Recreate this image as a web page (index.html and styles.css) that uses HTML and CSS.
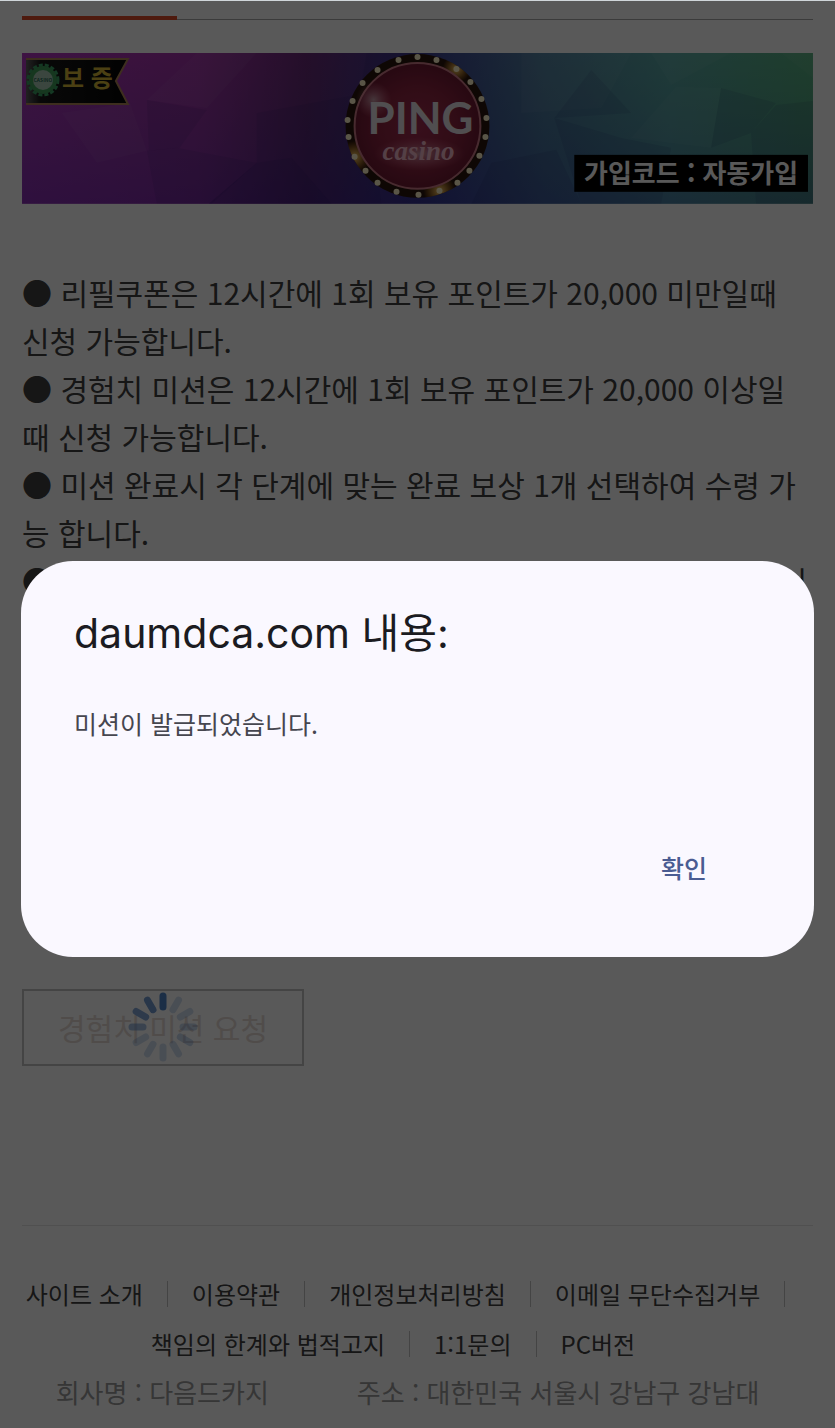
FILE: index.html
```html
<!DOCTYPE html>
<html lang="ko">
<head>
<meta charset="utf-8">
<meta name="viewport" content="width=device-width, initial-scale=1">
<title>경험치 미션</title>
<link rel="stylesheet" href="styles.css">
</head>
<body>

<div class="page">
  <div class="tab-line"><span class="tab-active"></span></div>

  <a class="banner" href="#">
    <svg viewBox="0 0 792 151" role="img" aria-label="PING casino">
      <defs>
        <linearGradient id="bg">
          <stop offset="0" stop-color="#b238c0"/>
          <stop offset=".22" stop-color="#a234a8"/>
          <stop offset=".36" stop-color="#6a2a78"/>
          <stop offset=".5" stop-color="#3c3c90"/>
          <stop offset=".66" stop-color="#5080a0"/>
          <stop offset=".82" stop-color="#5aa8a4"/>
          <stop offset="1" stop-color="#58b080"/>
        </linearGradient>
        <linearGradient id="shade" x2="0" y2="1">
          <stop offset="0" stop-color="#104060" stop-opacity="0"/>
          <stop offset="1" stop-color="#201890" stop-opacity=".3"/>
        </linearGradient>
        <radialGradient id="red">
          <stop offset="0" stop-color="#a02c50"/>
          <stop offset=".6" stop-color="#8c2440"/>
          <stop offset="1" stop-color="#701a34"/>
        </radialGradient>
        <radialGradient id="glow">
          <stop offset="0" stop-color="#ffd070"/>
          <stop offset="1" stop-color="#ffa020" stop-opacity="0"/>
        </radialGradient>
        <radialGradient id="shine">
          <stop offset="0" stop-color="#fff" stop-opacity=".8"/>
          <stop offset="1" stop-color="#ff90b0" stop-opacity="0"/>
        </radialGradient>
        <linearGradient id="ribbon">
          <stop offset="0" stop-color="#606060"/>
          <stop offset=".14" stop-color="#181818"/>
          <stop offset="1" stop-color="#050505"/>
        </linearGradient>
        <clipPath id="bulb-ring"><circle cx="396" cy="73" r="72"/></clipPath>
      </defs>

      <rect width="792" height="151" fill="url(#bg)"/>
      <rect width="792" height="151" fill="url(#shade)"/>

      <!-- low poly facets -->
      <g fill="#fff" fill-opacity=".04">
        <path d="M108 50 40 60 75 110 125 98z"/>
        <path d="M175 0h60l-50 55-60-8z"/>
        <path d="M500 0h110l-30 55-80 5z"/>
        <path d="M630 0h80l-60 32z"/>
        <path d="M655 34 700 35 690 95 610 85z"/>
        <path d="M760 0h32v25z"/>
      </g>
      <g fill="#101058" fill-opacity=".1">
        <path d="M125 98 155 95 235 110 190 151H135z"/>
        <path d="M235 60 345 40 360 151H187l48-41z"/>
        <path d="M235 110 270 105 310 151H187z"/>
        <path d="M345 0h50v70l-60-10z"/>
        <path d="M470 110 535 97 560 151H450z"/>
        <path d="M533 65 600 85 650 95 640 151H560z"/>
        <path d="M570 17 610 60 533 65z"/>
        <path d="M700 35 755 50 730 80 690 95z"/>
        <path d="M730 80 755 52 792 48V151H735z"/>
        <path d="M125 47 185 57 158 95 127 98z"/>
      </g>

      <!-- guarantee ribbon -->
      <path d="M4 5H107L94 28 107 52H4z" fill="url(#ribbon)"/>
      <path d="M4 6H106L94 28 106 51H4" fill="none" stroke="#b08458" stroke-width="2"/>
      <circle cx="21" cy="27" r="15" fill="none" stroke="#39a064" stroke-width="3" stroke-dasharray="4 2"/>
      <circle cx="21" cy="27" r="14" fill="#3f9f5b"/>
      <circle cx="21" cy="27" r="10" fill="#a8c8b4"/>
      <text class="seal-text" x="21" y="29">CASINO</text>
      <text class="ribbon-text" x="40" y="34">보 증</text>

      <!-- logo -->
      <circle cx="396" cy="73" r="72" fill="#2a150c"/>
      <g clip-path="url(#bulb-ring)">
        <circle cx="435" cy="16" r="14" fill="url(#glow)"/>
        <circle cx="333" cy="104" r="16" fill="url(#glow)"/>
        <circle cx="418" cy="138" r="16" fill="url(#glow)"/>
      </g>
      <circle cx="396" cy="73" r="63" fill="url(#red)" stroke="#cc7a86" stroke-width="2"/>
      <g fill="#fff4cc">
        <circle cx="396" cy="4" r="3"/><circle cx="415" cy="7" r="3"/><circle cx="435" cy="16" r="3"/>
        <circle cx="449" cy="29" r="3"/><circle cx="460" cy="46" r="3"/><circle cx="465" cy="65" r="3"/>
        <circle cx="464" cy="84" r="3"/><circle cx="458" cy="103" r="3"/><circle cx="448" cy="118" r="3"/>
        <circle cx="436" cy="130" r="3"/><circle cx="418" cy="138" r="3"/><circle cx="397" cy="142" r="3"/>
        <circle cx="375" cy="139" r="3"/><circle cx="356" cy="130" r="3"/><circle cx="344" cy="118" r="3"/>
        <circle cx="333" cy="104" r="3"/><circle cx="327" cy="84" r="3"/><circle cx="326" cy="67" r="3"/>
        <circle cx="331" cy="48" r="3"/><circle cx="341" cy="30" r="3"/><circle cx="356" cy="17" r="3"/>
        <circle cx="377" cy="7" r="3"/>
      </g>
      <ellipse cx="398" cy="101" rx="46" ry="17" fill="url(#shine)" opacity=".6"/>
      <circle cx="352" cy="47" r="18" fill="url(#shine)" opacity=".7"/>
      <text class="logo-ping" x="399" y="81">PING</text>
      <text class="logo-casino" x="397" y="107">casino</text>

      <!-- join code -->
      <rect x="553" y="102" width="234" height="37" fill="#000"/>
      <text class="code-text" x="670" y="130">가입코드 : 자동가입</text>
    </svg>
  </a>

  <div class="notice">
    <p>● 리필쿠폰은 12시간에 1회 보유 포인트가 20,000 미만일때 신청 가능합니다.</p>
    <p>● 경험치 미션은 12시간에 1회 보유 포인트가 20,000 이상일때 신청 가능합니다.</p>
    <p>● 미션 완료시 각 단계에 맞는 완료 보상 1개 선택하여 수령 가능 합니다.</p>
    <p class="notice-last"><span>●</span><span>서</span></p>
  </div>

  <button class="mission-btn" type="button">
    경험치 미션 요청
    <svg class="spinner" viewBox="-36 -36 72 72" stroke="#4f83c8" stroke-width="7" stroke-linecap="round" aria-hidden="true">
      <path d="M0-31V-20"/>
      <path d="M0-31V-20" transform="rotate(30)" opacity=".25"/>
      <path d="M0-31V-20" transform="rotate(60)" opacity=".25"/>
      <path d="M0-31V-20" transform="rotate(90)" opacity=".3"/>
      <path d="M0-31V-20" transform="rotate(120)" opacity=".3"/>
      <path d="M0-31V-20" transform="rotate(150)" opacity=".25"/>
      <path d="M0-31V-20" transform="rotate(180)" opacity=".25"/>
      <path d="M0-31V-20" transform="rotate(210)" opacity=".25"/>
      <path d="M0-31V-20" transform="rotate(240)" opacity=".25"/>
      <path d="M0-31V-20" transform="rotate(270)" opacity=".5"/>
      <path d="M0-31V-20" transform="rotate(300)" opacity=".7"/>
      <path d="M0-31V-20" transform="rotate(330)" opacity=".8"/>
    </svg>
  </button>

  <footer class="footer">
    <ul class="footer-links">
      <li><a href="#">사이트 소개</a></li>
      <li><a href="#">이용약관</a></li>
      <li><a href="#">개인정보처리방침</a></li>
      <li><a href="#">이메일 무단수집거부</a></li>
      <li><a href="#">책임의 한계와 법적고지</a></li>
      <li><a href="#">1:1문의</a></li>
      <li><a href="#">PC버전</a></li>
    </ul>
    <div class="company">
      <span>회사명 : 다음드카지</span>
      <span>주소 : 대한민국 서울시 강남구 강남대</span>
    </div>
  </footer>
</div>

<div class="overlay">
  <div class="dialog" role="alertdialog" aria-labelledby="dialog-title" aria-describedby="dialog-text">
    <h1 id="dialog-title">daumdca.com 내용:</h1>
    <p id="dialog-text">미션이 발급되었습니다.</p>
    <div class="dialog-actions">
      <button type="button">확인</button>
    </div>
  </div>
</div>

</body>
</html>
```
FILE: styles.css
```css
* {
  box-sizing: border-box;
}

body {
  margin: 0;
  background: #fff;
  color: #404040;
  font-family: "Noto Sans CJK KR", sans-serif;
  overflow: hidden;
}

a {
  color: inherit;
  text-decoration: none;
}

.page {
  padding: 16px 22px 0;
}

.tab-line {
  height: 4px;
  margin-bottom: 33px;
  display: flex;
  background: linear-gradient(#aaa, #aaa) bottom / 100% 1px no-repeat;
}

.tab-active {
  width: 155px;
  background: #e04a2a;
}

.banner,
.banner svg {
  display: block;
  width: 100%;
}

.seal-text {
  font-size: 5px;
  font-weight: bold;
  text-anchor: middle;
  fill: #2c6c58;
}

.ribbon-text {
  font-size: 24px;
  font-weight: 700;
  fill: #d8b838;
}

.logo-ping {
  font-family: Lato, sans-serif;
  font-size: 44px;
  font-weight: bold;
  text-anchor: middle;
  fill: #e4e0e6;
}

.logo-casino {
  font-family: "Liberation Serif", serif;
  font-size: 27px;
  font-weight: bold;
  font-style: italic;
  text-anchor: middle;
  fill: #f0b8c8;
}

.code-text {
  font-size: 26px;
  font-weight: 700;
  text-anchor: middle;
  fill: #fff;
}

.notice {
  min-height: 719px;
  padding: 64px 6px 0 0;
  font-size: 30px;
  line-height: 48px;
  word-break: break-all;
}

.notice p {
  margin: 0;
}

.notice-last {
  display: flex;
  justify-content: space-between;
}

.mission-btn {
  position: relative;
  display: block;
  margin-top: 66px;
  padding: 14px 34px;
  border: 2px solid #c4c4c4;
  background: none;
  color: #e4d9d4;
  font: inherit;
  font-size: 30px;
  line-height: 45px;
}

.spinner {
  position: absolute;
  top: 50%;
  left: 50%;
  width: 72px;
  height: 72px;
  margin: -36px;
}

.footer {
  margin-top: 159px;
  padding-top: 43px;
  border-top: 1px solid #e4e4e4;
}

.footer-links {
  display: flex;
  flex-wrap: wrap;
  justify-content: center;
  margin: 0;
  padding: 0;
  list-style: none;
  font-size: 24px;
  line-height: 50px;
}

.footer-links li {
  display: flex;
  align-items: center;
  margin-right: 24px;
}

.footer-links li::after {
  content: "";
  width: 1px;
  height: 26px;
  margin-left: 24px;
  background: #c4c4c4;
}

.footer-links li:last-child::after {
  background: none;
}

.company {
  display: flex;
  justify-content: center;
  gap: 88px;
  padding-right: 20px;
  color: #9a9a9a;
  font-size: 26px;
  line-height: 46px;
  white-space: nowrap;
}

.overlay {
  position: fixed;
  inset: 0;
  display: flex;
  align-items: center;
  padding: 88px 21px 0;
  border-top: 1px solid #d0d6da;
  background: rgba(0, 0, 0, .65);
}

.dialog {
  width: 100%;
  padding: 42px 53px 48px;
  border-radius: 52px;
  background: #faf8ff;
  color: #1b1b21;
}

.dialog h1 {
  margin: 0 0 32px;
  font-family: Inter, "Noto Sans CJK KR", sans-serif;
  font-size: 41px;
  font-weight: 400;
  line-height: 60px;
}

.dialog p {
  margin: 0;
  color: #46464f;
  font-size: 25px;
  line-height: 56px;
}

.dialog-actions {
  display: flex;
  justify-content: flex-end;
  margin-top: 74px;
}

.dialog button {
  padding: 14px 54px;
  border: 0;
  background: none;
  color: #4a5c92;
  font: inherit;
  font-size: 25px;
  font-weight: 500;
  line-height: 56px;
}
```
